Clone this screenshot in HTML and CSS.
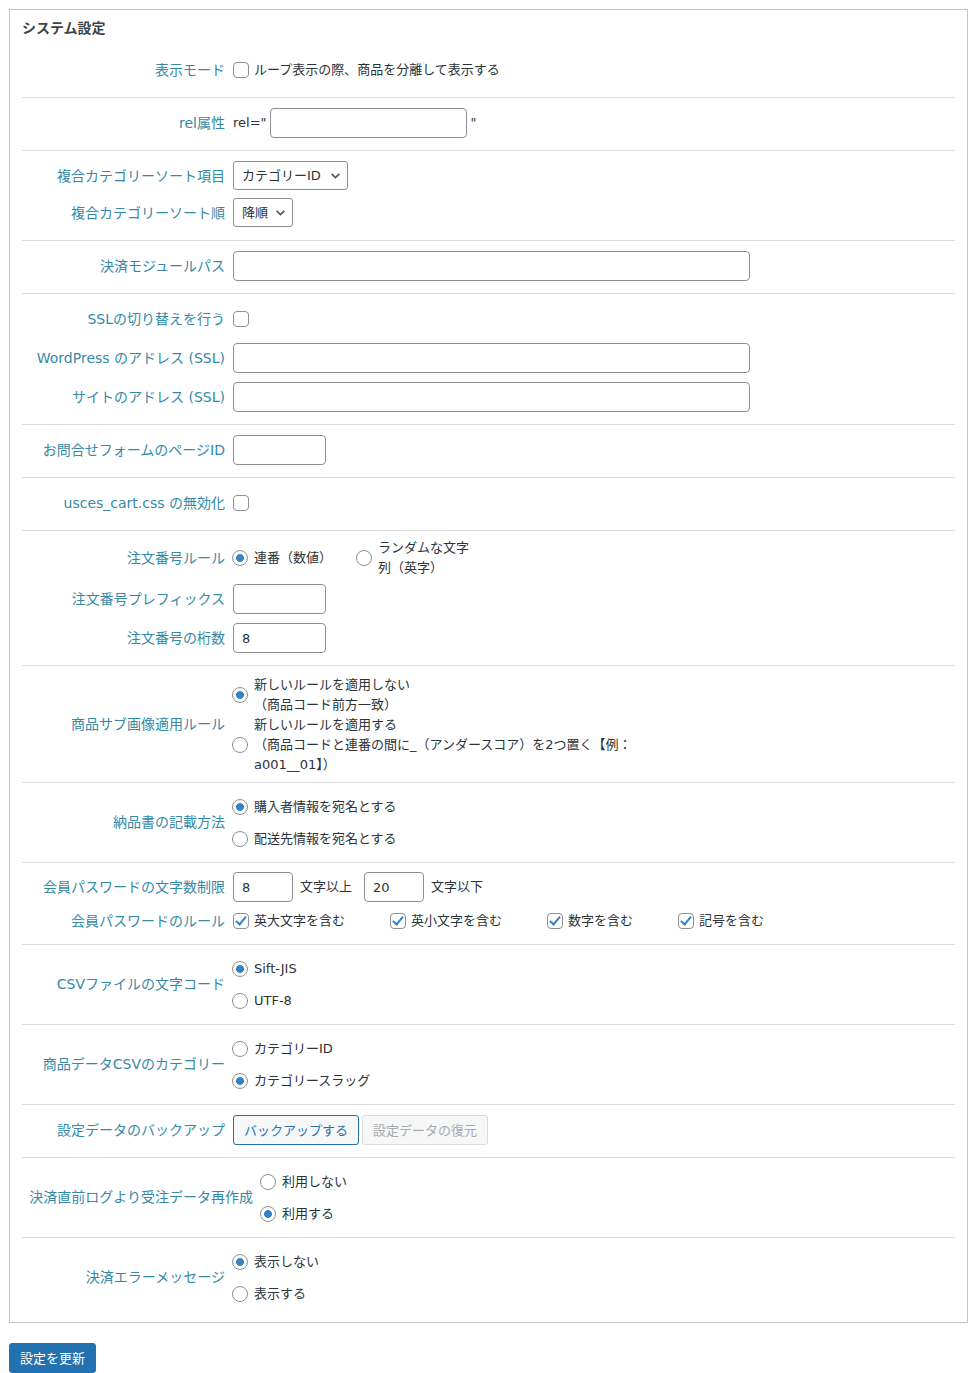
FILE: index.html
```html
<!DOCTYPE html>
<html>
<head>
    <meta charset="utf-8">
    <link rel="stylesheet" href="styles.css">
</head>
<body>
    <form class="settings">
        <div class="panel">
            <h3 class="panel-title">システム設定</h3>

            <div class="section">
                <div class="row">
                    <div class="label">表示モード</div>
                    <div class="field">
                        <label class="choice"><input type="checkbox" name="divide_item">ループ表示の際、商品を分離して表示する</label>
                    </div>
                </div>
            </div>

            <div class="section">
                <div class="row">
                    <div class="label">rel属性</div>
                    <div class="field">
                        <span class="rel-text">rel="</span>
                        <input type="text" class="text text-mid" name="rel">
                        <span class="rel-end">"</span>
                    </div>
                </div>
            </div>

            <div class="section">
                <div class="row row-select">
                    <div class="label">複合カテゴリーソート項目</div>
                    <div class="field">
                        <span class="select">
                            <select class="select-cat" name="sort_item"><option>カテゴリーID</option><option>カテゴリー名</option></select>
                            <svg class="chev" viewBox="0 0 10 10"><polyline points="1.5,3.5 5,7 8.5,3.5" fill="none" stroke="#50575e" stroke-width="1.5"/></svg>
                        </span>
                    </div>
                </div>
                <div class="row row-select">
                    <div class="label">複合カテゴリーソート順</div>
                    <div class="field">
                        <span class="select">
                            <select class="select-order" name="sort_order"><option>降順</option><option>昇順</option></select>
                            <svg class="chev" viewBox="0 0 10 10"><polyline points="1.5,3.5 5,7 8.5,3.5" fill="none" stroke="#50575e" stroke-width="1.5"/></svg>
                        </span>
                    </div>
                </div>
            </div>

            <div class="section">
                <div class="row">
                    <div class="label">決済モジュールパス</div>
                    <div class="field"><input type="text" class="text text-wide" name="module_path"></div>
                </div>
            </div>

            <div class="section">
                <div class="row">
                    <div class="label">SSLの切り替えを行う</div>
                    <div class="field"><input type="checkbox" name="use_ssl"></div>
                </div>
                <div class="row">
                    <div class="label">WordPress のアドレス (SSL)</div>
                    <div class="field"><input type="text" class="text text-wide" name="ssl_wp"></div>
                </div>
                <div class="row">
                    <div class="label">サイトのアドレス (SSL)</div>
                    <div class="field"><input type="text" class="text text-wide" name="ssl_site"></div>
                </div>
            </div>

            <div class="section">
                <div class="row">
                    <div class="label">お問合せフォームのページID</div>
                    <div class="field"><input type="text" class="text text-short" name="inquiry_id"></div>
                </div>
            </div>

            <div class="section">
                <div class="row">
                    <div class="label">usces_cart.css の無効化</div>
                    <div class="field"><input type="checkbox" name="no_cart_css"></div>
                </div>
            </div>

            <div class="section">
                <div class="row row-rule">
                    <div class="label">注文番号ルール</div>
                    <div class="field field-inline">
                        <label class="choice"><input type="radio" name="order_rule" checked>連番（数値）</label>
                        <label class="choice"><input type="radio" name="order_rule"><span class="narrow">ランダムな文字<br>列（英字）</span></label>
                    </div>
                </div>
                <div class="row">
                    <div class="label">注文番号プレフィックス</div>
                    <div class="field"><input type="text" class="text text-short" name="order_prefix"></div>
                </div>
                <div class="row">
                    <div class="label">注文番号の桁数</div>
                    <div class="field"><input type="text" class="text text-short" name="order_digit" value="8"></div>
                </div>
            </div>

            <div class="section">
                <div class="row row-subimage">
                    <div class="label">商品サブ画像適用ルール</div>
                    <div class="field">
                        <div class="choices choices-tight">
                            <label class="choice"><input type="radio" name="subimage" checked><span>新しいルールを適用しない<br>（商品コード前方一致）</span></label>
                            <label class="choice"><input type="radio" name="subimage"><span>新しいルールを適用する<br>（商品コードと連番の間に_（アンダースコア）を2つ置く【例：<br>a001__01】）</span></label>
                        </div>
                    </div>
                </div>
            </div>

            <div class="section">
                <div class="row">
                    <div class="label">納品書の記載方法</div>
                    <div class="field">
                        <div class="choices">
                            <label class="choice"><input type="radio" name="delivery_name" checked>購入者情報を宛名とする</label>
                            <label class="choice"><input type="radio" name="delivery_name">配送先情報を宛名とする</label>
                        </div>
                    </div>
                </div>
            </div>

            <div class="section">
                <div class="row row-pass">
                    <div class="label">会員パスワードの文字数制限</div>
                    <div class="field">
                        <input type="text" class="text text-tiny" name="pass_min" value="8">
                        <span class="unit">文字以上</span>
                        <input type="text" class="text text-tiny" name="pass_max" value="20">
                        <span class="unit">文字以下</span>
                    </div>
                </div>
                <div class="row row-checks">
                    <div class="label">会員パスワードのルール</div>
                    <div class="field">
                        <label class="choice check-item"><input type="checkbox" checked>英大文字を含む</label>
                        <label class="choice check-item"><input type="checkbox" checked>英小文字を含む</label>
                        <label class="choice check-item"><input type="checkbox" checked>数字を含む</label>
                        <label class="choice check-item"><input type="checkbox" checked>記号を含む</label>
                    </div>
                </div>
            </div>

            <div class="section">
                <div class="row">
                    <div class="label">CSVファイルの文字コード</div>
                    <div class="field">
                        <div class="choices">
                            <label class="choice"><input type="radio" name="csv_code" checked>Sift-JIS</label>
                            <label class="choice"><input type="radio" name="csv_code">UTF-8</label>
                        </div>
                    </div>
                </div>
            </div>

            <div class="section">
                <div class="row">
                    <div class="label">商品データCSVのカテゴリー</div>
                    <div class="field">
                        <div class="choices">
                            <label class="choice"><input type="radio" name="csv_cat">カテゴリーID</label>
                            <label class="choice"><input type="radio" name="csv_cat" checked>カテゴリースラッグ</label>
                        </div>
                    </div>
                </div>
            </div>

            <div class="section">
                <div class="row">
                    <div class="label">設定データのバックアップ</div>
                    <div class="field field-buttons">
                        <button type="button" class="button">バックアップする</button>
                        <button type="button" class="button" disabled>設定データの復元</button>
                    </div>
                </div>
            </div>

            <div class="section section-wide">
                <div class="row">
                    <div class="label">決済直前ログより受注データ再作成</div>
                    <div class="field">
                        <div class="choices">
                            <label class="choice"><input type="radio" name="recreate">利用しない</label>
                            <label class="choice"><input type="radio" name="recreate" checked>利用する</label>
                        </div>
                    </div>
                </div>
            </div>

            <div class="section">
                <div class="row">
                    <div class="label">決済エラーメッセージ</div>
                    <div class="field">
                        <div class="choices">
                            <label class="choice"><input type="radio" name="error_msg" checked>表示しない</label>
                            <label class="choice"><input type="radio" name="error_msg">表示する</label>
                        </div>
                    </div>
                </div>
            </div>
        </div>

        <button type="submit" class="button button-primary">設定を更新</button>
    </form>
</body>
</html>
```

FILE: styles.css
```css
body {
    margin: 0;
    padding: 9px 6px 0 9px;
    background-color: #fff;
    font-family: "DejaVu Sans", "Noto Sans CJK JP", sans-serif;
    font-size: 13px;
    color: #2c3338;
}

.panel {
    border: 1px solid #c3c4c7;
    padding: 0 12px 5px;
}

.panel-title {
    margin: 8px 0 7px;
    font-size: 14px;
    line-height: 20px;
    font-weight: bold;
    color: #3c434a;
}

.section {
    padding: 6px 0 7px;
    border-bottom: 1px solid #dcdcde;
}

.section:last-child {
    border-bottom: none;
}

.row {
    display: flex;
    align-items: center;
    min-height: 30px;
    padding: 4px 0 5px;
}

.label {
    flex: none;
    width: 203px;
    margin-right: 8px;
    text-align: right;
    font-size: 14px;
    line-height: 20px;
    color: #3589a6;
    white-space: nowrap;
}

.section-wide .label {
    width: 231px;
}

.field {
    display: flex;
    align-items: center;
    line-height: 20px;
}

.field-inline {
    gap: 25px;
}

.row-select {
    min-height: 29px;
    padding: 4px 0;
}

.row-select + .row-select {
    padding-bottom: 6px;
}

.row-rule {
    padding: 1px 0 2px;
}

.row-subimage {
    padding: 2px 0 1px;
}

.row-pass {
    padding: 3px 0;
}

.row-checks {
    min-height: 24px;
    padding: 4px 0;
}

.choices {
    display: flex;
    flex-direction: column;
    gap: 8px;
    padding-top: 2px;
    margin-bottom: -1px;
}

.choices-tight {
    gap: 0;
    padding-top: 1px;
}

.choice {
    display: flex;
    align-items: center;
    min-height: 24px;
    cursor: pointer;
}

.narrow {
    width: 96px;
}

.check-item {
    margin-right: 45px;
}

.rel-text {
    margin-right: 3px;
}

.rel-end {
    margin-left: 4px;
}

.unit {
    margin: 0 12px 0 7px;
}

/* text inputs */
.text {
    box-sizing: border-box;
    height: 30px;
    padding: 0 8px;
    border: 1px solid #8c8f94;
    border-radius: 4px;
    background-color: #fff;
    font-family: inherit;
    font-size: 13px;
    color: #2c3338;
}

.text-wide {
    width: 517px;
}

.text-mid {
    width: 197px;
}

.text-short {
    width: 93px;
}

.text-tiny {
    width: 60px;
}

/* selects */
.select {
    position: relative;
    display: inline-block;
}

.select select {
    appearance: none;
    -webkit-appearance: none;
    box-sizing: border-box;
    height: 29px;
    padding: 0 22px 0 8px;
    border: 1px solid #8c8f94;
    border-radius: 3px;
    background-color: #fff;
    font-family: inherit;
    font-size: 13px;
    color: #2c3338;
}

.select-cat {
    width: 115px;
}

.select-order {
    width: 60px;
}

.chev {
    position: absolute;
    right: 7px;
    top: 50%;
    width: 11px;
    height: 11px;
    margin-top: -6px;
    pointer-events: none;
}

/* checkbox and radio */
input[type="checkbox"],
input[type="radio"] {
    appearance: none;
    -webkit-appearance: none;
    position: relative;
    flex: none;
    box-sizing: border-box;
    width: 16px;
    height: 16px;
    margin: 0 5px 0 0;
    border: 1px solid #8c8f94;
    background-color: #fff;
}

input[type="checkbox"] {
    border-radius: 4px;
}

input[type="radio"] {
    margin-left: -1px;
    margin-right: 6px;
    border-radius: 50%;
}

input[type="radio"]:checked {
    background: radial-gradient(circle, #3582c4 0 3.6px, #fff 4.2px);
}

input[type="checkbox"]:checked::before {
    content: "";
    position: absolute;
    left: 4px;
    top: 0;
    width: 4px;
    height: 9px;
    border: solid #3582c4;
    border-width: 0 2px 2px 0;
    transform: rotate(40deg);
}

/* buttons */
.field-buttons {
    gap: 3px;
}

.button {
    box-sizing: border-box;
    height: 30px;
    padding: 0 10px;
    border: 1px solid #2271b1;
    border-radius: 3px;
    background-color: #f6f7f7;
    font-family: "Noto Sans CJK JP", sans-serif;
    font-size: 13px;
    line-height: 28px;
    color: #2271b1;
    cursor: pointer;
}

.button[disabled] {
    border-color: #dcdcde;
    color: #a7aaad;
    cursor: default;
}

.button-primary {
    margin-top: 20px;
    background-color: #2271b1;
    color: #fff;
}
```
